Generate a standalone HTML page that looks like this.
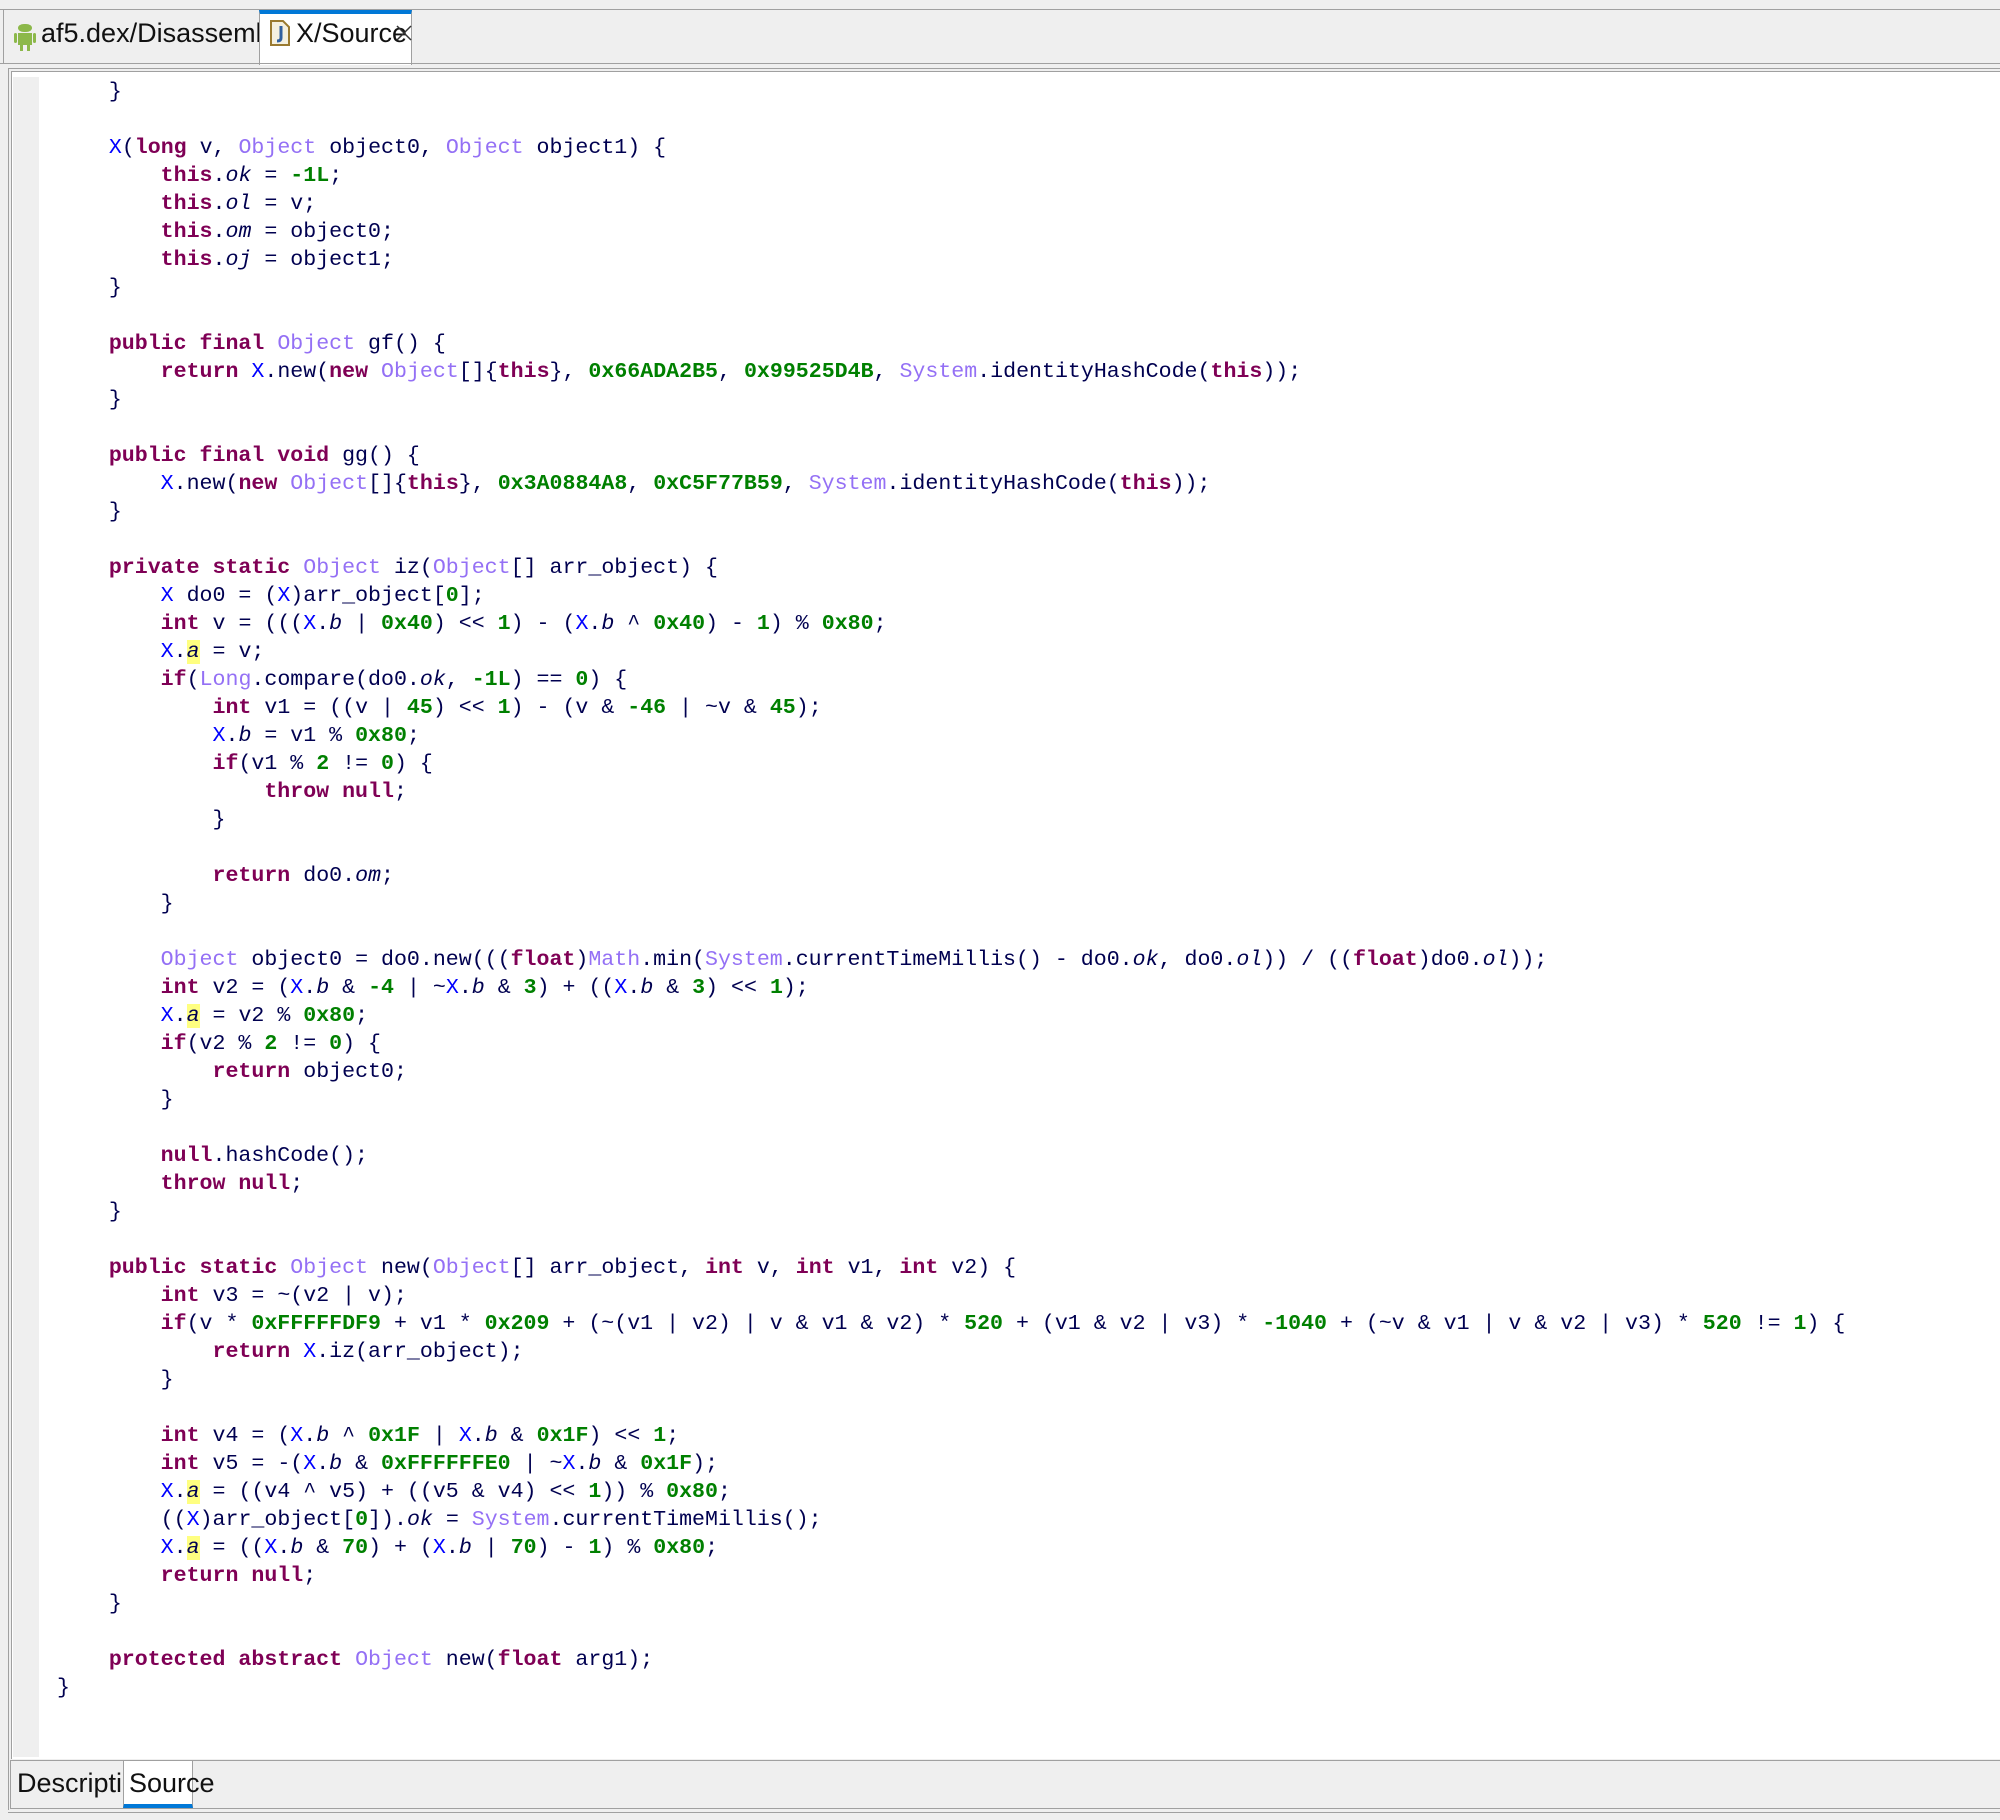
<!DOCTYPE html>
<html><head><meta charset="utf-8"><style>
html,body{margin:0;padding:0;width:2000px;height:1820px;background:#efefef;overflow:hidden;position:relative;font-family:"Liberation Sans",sans-serif}
.abs{position:absolute}
#topline{left:0;top:9px;width:2000px;height:1px;background:#a0a0a0}
#tabline{left:0;top:63px;width:2000px;height:1px;background:#a0a0a0}
.tab{position:absolute;top:9px;height:54px;font-size:27px;color:#111;box-sizing:border-box}
#t1{left:3px;width:256px;border-left:1px solid #a0a0a0;border-top:1px solid #a0a0a0}
#t2{left:259px;width:153px;background:#fff;height:55px;border:1px solid #a0a0a0;border-bottom:none;border-top:4px solid #0078d7;top:10px}
#frame{left:8px;top:68px;width:1992px;height:1742px;border-top:1px solid #a0a0a0;border-left:1px solid #a0a0a0;box-sizing:border-box}
#frame2{left:11px;top:71px;width:1989px;height:1688px;border-top:1px solid #a0a0a0;border-left:1px solid #a0a0a0;background:#fff;box-sizing:border-box}
#gutter{left:13px;top:77px;width:26px;height:1680px;background:#efefef}
pre{position:absolute;left:57px;top:78px;margin:0;font-family:"Liberation Mono",monospace;font-size:21.6px;line-height:28px;color:#000050}
.k{color:#7f0055;font-weight:bold}
.t{color:#9470f5}
.n{color:#008000;font-weight:bold}
.c{color:#0000ff}
.f{font-style:italic}
.h{background:#ffff80}
.btab{position:absolute;top:1761px;height:47px;font-size:27px;color:#111;box-sizing:border-box;padding-top:7px}
</style></head><body>
<div class="abs" id="topline"></div>
<div class="tab" id="t1">
<svg class="abs" style="left:10px;top:12px" width="22" height="30" viewBox="0 0 22 30"><rect x="4" y="2" width="14" height="8" rx="6" fill="#8cb84a"/><rect x="4" y="11" width="14" height="12" fill="#8cb84a"/><rect x="0" y="11" width="3" height="10" rx="1.5" fill="#8cb84a"/><rect x="19" y="11" width="3" height="10" rx="1.5" fill="#8cb84a"/><rect x="6" y="22" width="3" height="7" fill="#8cb84a"/><rect x="13" y="22" width="3" height="7" fill="#8cb84a"/></svg>
<span class="abs" style="left:37px;top:8px">af5.dex/Disassembly</span></div>
<div class="tab" id="t2">
<svg class="abs" style="left:10px;top:6px" width="20" height="26" viewBox="0 0 20 26"><path d="M1 1H13L19 7V25H1Z" fill="#f4f0e0" stroke="#9a7a30" stroke-width="2"/><path d="M11 6V18Q11 21 7 21" fill="none" stroke="#3060a0" stroke-width="3"/></svg>
<span class="abs" style="left:36px;top:4px">X/Source</span>
<svg class="abs" style="left:135px;top:10px" width="18" height="18"><path d="M2 2L16 16M16 2L2 16" stroke="#333" stroke-width="1.5"/></svg></div>
<div class="abs" id="tabline"></div>
<div class="abs" id="frame"></div>
<div class="abs" id="frame2"></div>
<div class="abs" id="gutter"></div>
<pre>    }

    <span class="c">X</span>(<span class="k">long</span> v, <span class="t">Object</span> object0, <span class="t">Object</span> object1) {
        <span class="k">this</span>.<span class="f">ok</span> = <span class="n">-1L</span>;
        <span class="k">this</span>.<span class="f">ol</span> = v;
        <span class="k">this</span>.<span class="f">om</span> = object0;
        <span class="k">this</span>.<span class="f">oj</span> = object1;
    }

    <span class="k">public final</span> <span class="t">Object</span> gf() {
        <span class="k">return</span> <span class="c">X</span>.new(<span class="k">new</span> <span class="t">Object</span>[]{<span class="k">this</span>}, <span class="n">0x66ADA2B5</span>, <span class="n">0x99525D4B</span>, <span class="t">System</span>.identityHashCode(<span class="k">this</span>));
    }

    <span class="k">public final void</span> gg() {
        <span class="c">X</span>.new(<span class="k">new</span> <span class="t">Object</span>[]{<span class="k">this</span>}, <span class="n">0x3A0884A8</span>, <span class="n">0xC5F77B59</span>, <span class="t">System</span>.identityHashCode(<span class="k">this</span>));
    }

    <span class="k">private static</span> <span class="t">Object</span> iz(<span class="t">Object</span>[] arr_object) {
        <span class="c">X</span> do0 = (<span class="c">X</span>)arr_object[<span class="n">0</span>];
        <span class="k">int</span> v = (((<span class="c">X</span>.<span class="f">b</span> | <span class="n">0x40</span>) &lt;&lt; <span class="n">1</span>) - (<span class="c">X</span>.<span class="f">b</span> ^ <span class="n">0x40</span>) - <span class="n">1</span>) % <span class="n">0x80</span>;
        <span class="c">X</span>.<span class="f h">a</span> = v;
        <span class="k">if</span>(<span class="t">Long</span>.compare(do0.<span class="f">ok</span>, <span class="n">-1L</span>) == <span class="n">0</span>) {
            <span class="k">int</span> v1 = ((v | <span class="n">45</span>) &lt;&lt; <span class="n">1</span>) - (v &amp; <span class="n">-46</span> | ~v &amp; <span class="n">45</span>);
            <span class="c">X</span>.<span class="f">b</span> = v1 % <span class="n">0x80</span>;
            <span class="k">if</span>(v1 % <span class="n">2</span> != <span class="n">0</span>) {
                <span class="k">throw null</span>;
            }

            <span class="k">return</span> do0.<span class="f">om</span>;
        }

        <span class="t">Object</span> object0 = do0.new(((<span class="k">float</span>)<span class="t">Math</span>.min(<span class="t">System</span>.currentTimeMillis() - do0.<span class="f">ok</span>, do0.<span class="f">ol</span>)) / ((<span class="k">float</span>)do0.<span class="f">ol</span>));
        <span class="k">int</span> v2 = (<span class="c">X</span>.<span class="f">b</span> &amp; <span class="n">-4</span> | ~<span class="c">X</span>.<span class="f">b</span> &amp; <span class="n">3</span>) + ((<span class="c">X</span>.<span class="f">b</span> &amp; <span class="n">3</span>) &lt;&lt; <span class="n">1</span>);
        <span class="c">X</span>.<span class="f h">a</span> = v2 % <span class="n">0x80</span>;
        <span class="k">if</span>(v2 % <span class="n">2</span> != <span class="n">0</span>) {
            <span class="k">return</span> object0;
        }

        <span class="k">null</span>.hashCode();
        <span class="k">throw null</span>;
    }

    <span class="k">public static</span> <span class="t">Object</span> new(<span class="t">Object</span>[] arr_object, <span class="k">int</span> v, <span class="k">int</span> v1, <span class="k">int</span> v2) {
        <span class="k">int</span> v3 = ~(v2 | v);
        <span class="k">if</span>(v * <span class="n">0xFFFFFDF9</span> + v1 * <span class="n">0x209</span> + (~(v1 | v2) | v &amp; v1 &amp; v2) * <span class="n">520</span> + (v1 &amp; v2 | v3) * <span class="n">-1040</span> + (~v &amp; v1 | v &amp; v2 | v3) * <span class="n">520</span> != <span class="n">1</span>) {
            <span class="k">return</span> <span class="c">X</span>.iz(arr_object);
        }

        <span class="k">int</span> v4 = (<span class="c">X</span>.<span class="f">b</span> ^ <span class="n">0x1F</span> | <span class="c">X</span>.<span class="f">b</span> &amp; <span class="n">0x1F</span>) &lt;&lt; <span class="n">1</span>;
        <span class="k">int</span> v5 = -(<span class="c">X</span>.<span class="f">b</span> &amp; <span class="n">0xFFFFFFE0</span> | ~<span class="c">X</span>.<span class="f">b</span> &amp; <span class="n">0x1F</span>);
        <span class="c">X</span>.<span class="f h">a</span> = ((v4 ^ v5) + ((v5 &amp; v4) &lt;&lt; <span class="n">1</span>)) % <span class="n">0x80</span>;
        ((<span class="c">X</span>)arr_object[<span class="n">0</span>]).<span class="f">ok</span> = <span class="t">System</span>.currentTimeMillis();
        <span class="c">X</span>.<span class="f h">a</span> = ((<span class="c">X</span>.<span class="f">b</span> &amp; <span class="n">70</span>) + (<span class="c">X</span>.<span class="f">b</span> | <span class="n">70</span>) - <span class="n">1</span>) % <span class="n">0x80</span>;
        <span class="k">return null</span>;
    }

    <span class="k">protected abstract</span> <span class="t">Object</span> new(<span class="k">float</span> arg1);
}</pre>
<div class="btab" style="left:10px;width:113px;border-left:1px solid #a0a0a0;padding-left:6px">Description</div>
<div class="btab" style="left:123px;width:70px;background:#fff;border-left:1px solid #a0a0a0;border-right:1px solid #a0a0a0;border-bottom:4px solid #0078d7;padding-left:5px">Source</div>
<div class="abs" style="left:10px;top:1760px;width:1990px;height:1px;background:#a0a0a0"></div>
<div class="abs" style="left:10px;top:1808px;width:1990px;height:1px;background:#a0a0a0"></div>
<div class="abs" style="left:8px;top:1812px;width:1992px;height:1px;background:#a0a0a0"></div>
</body></html>
